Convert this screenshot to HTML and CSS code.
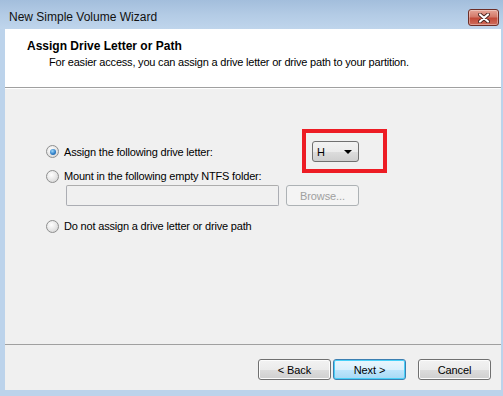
FILE: index.html
```html
<!DOCTYPE html>
<html>
<head>
    <meta charset="UTF-8">
    <title>New Simple Volume Wizard</title>
    <link rel="stylesheet" href="styles.css">
</head>
<body>
    <div class="window">
        <div class="titlebar">
            <span class="title">New Simple Volume Wizard</span>
            <button class="close-btn" title="Close">
                <svg width="12" height="10" viewBox="0 0 12 10">
                    <path d="M2 1.5 L10 8.5 M10 1.5 L2 8.5" stroke="#4a2420" stroke-width="4" stroke-linecap="round"/>
                    <path d="M2 1.5 L10 8.5 M10 1.5 L2 8.5" stroke="#ffffff" stroke-width="2.2" stroke-linecap="round"/>
                </svg>
            </button>
        </div>

        <div class="client">
            <div class="header">
                <div class="header-title">Assign Drive Letter or Path</div>
                <div class="header-sub">For easier access, you can assign a drive letter or drive path to your partition.</div>
            </div>

            <div class="content">
                <div class="row row-letter">
                    <label class="option">
                        <span class="radio checked"></span>
                        Assign the following drive letter:
                    </label>
                    <div class="combo-wrap">
                        <div class="combo">
                            <span>H</span>
                            <span class="arrow"></span>
                        </div>
                        <div class="highlight"></div>
                    </div>
                </div>

                <div class="row row-mount">
                    <label class="option">
                        <span class="radio"></span>
                        Mount in the following empty NTFS folder:
                    </label>
                </div>

                <div class="row row-path">
                    <div class="path-input"></div>
                    <button class="btn" disabled>Browse...</button>
                </div>

                <div class="row row-none">
                    <label class="option">
                        <span class="radio"></span>
                        Do not assign a drive letter or drive path
                    </label>
                </div>
            </div>

            <div class="footer">
                <button class="btn">&lt; Back</button>
                <button class="btn btn-default">Next &gt;</button>
                <button class="btn btn-cancel">Cancel</button>
            </div>
        </div>
    </div>
</body>
</html>
```

FILE: styles.css
```css
body {
    margin: 0;
    font-family: 'Liberation Sans', Arial, sans-serif;
    background: #b9d1ea;
}
.window {
    width: 503px;
    height: 396px;
    background: #bcd3eb;
    display: flex;
    flex-direction: column;
    overflow: hidden;
}
.titlebar {
    height: 29px;
    box-sizing: border-box;
    padding: 5px 4px 0 9px;
    display: flex;
    align-items: flex-start;
    justify-content: space-between;
    background: linear-gradient(180deg, #a3bedc 0%, #b3cbe5 50%, #bfd5ec 100%);
}
.title {
    font-size: 12px;
    color: #111;
    line-height: 24px;
}
.close-btn {
    width: 31px;
    height: 17px;
    margin-top: 4px;
    padding: 0;
    border: 1px solid #6d2e27;
    border-radius: 3px;
    background: linear-gradient(180deg, #e6a597 0%, #d47a6a 45%, #c24a38 55%, #cf6d5c 100%);
    box-shadow: inset 0 0 0 1px rgba(255,255,255,0.35);
    display: flex;
    align-items: center;
    justify-content: center;
}
.client {
    margin: 0 2px 0 5px;
    height: 361px;
    background: #f0f0f0;
    display: flex;
    flex-direction: column;
}
.header {
    height: 59px;
    box-sizing: border-box;
    background: #fff;
    border-bottom: 1px solid #a0a0a0;
    padding: 10px 0 0 22px;
}
.header-title {
    font-size: 12px;
    font-weight: bold;
    color: #000;
    line-height: 14px;
}
.header-sub {
    font-size: 11px;
    letter-spacing: -0.2px;
    color: #000;
    padding-left: 22px;
    margin-top: 2px;
    line-height: 14px;
}
.content {
    flex: 1;
    border-top: 1px solid #fff;
    padding: 0 0 0 41px;
    font-size: 11px;
    letter-spacing: -0.18px;
    color: #000;
}
.row {
    display: flex;
    align-items: center;
}
.row-letter {
    margin-top: 52px;
    height: 21px;
}
.row-mount {
    margin-top: 6px;
    height: 16px;
}
.row-path {
    margin-top: 1px;
    padding-left: 20px;
    gap: 7px;
}
.row-none {
    margin-top: 12px;
    height: 16px;
}
.option {
    display: flex;
    align-items: center;
    gap: 5px;
}
.row-letter .option {
    width: 266px;
}
.radio {
    width: 11px;
    height: 11px;
    border: 1px solid #8e8f8f;
    border-radius: 50%;
    background: radial-gradient(circle at 40% 35%, #ffffff 0%, #eaeaea 45%, #cfcfcf 100%);
    display: flex;
    align-items: center;
    justify-content: center;
}
.radio.checked::after {
    content: "";
    width: 6px;
    height: 6px;
    border-radius: 50%;
    background: radial-gradient(circle at 40% 35%, #9ed8fb 0%, #2f7fc8 55%, #16508c 100%);
}
.combo-wrap {
    position: relative;
}
.combo {
    width: 47px;
    height: 21px;
    box-sizing: border-box;
    border: 1px solid #707070;
    border-radius: 3px;
    background: linear-gradient(180deg, #f2f2f2 0%, #ebebeb 50%, #dddddd 51%, #cfcfcf 100%);
    display: flex;
    align-items: center;
    justify-content: space-between;
    padding: 0 6px 0 4px;
    font-size: 11px;
}
.arrow {
    width: 0;
    height: 0;
    border-left: 4px solid transparent;
    border-right: 4px solid transparent;
    border-top: 4px solid #000;
}
.highlight {
    position: absolute;
    left: -10px;
    top: -12px;
    width: 85px;
    height: 44px;
    box-sizing: border-box;
    border: 4px solid #ed1c24;
}
.path-input {
    width: 213px;
    height: 21px;
    box-sizing: border-box;
    border: 1px solid #abadb3;
    border-top-color: #adadad;
    border-radius: 2px;
    background: #f0f0f0;
}
.btn {
    width: 73px;
    height: 21px;
    padding: 0;
    font-family: inherit;
    font-size: 11px;
    letter-spacing: -0.1px;
    color: #000;
    border: 1px solid #707070;
    border-radius: 3px;
    background: linear-gradient(180deg, #f2f2f2 0%, #ebebeb 50%, #dddddd 51%, #cfcfcf 100%);
    box-shadow: inset 0 0 0 1px #fcfcfc;
}
.btn:disabled {
    color: #a0a0a0;
    border-color: #adb2b5;
    background: #f4f4f4;
    box-shadow: none;
}
.footer {
    height: 46px;
    box-sizing: border-box;
    border-top: 1px solid #a0a0a0;
    padding: 14px 10px 0 0;
    display: flex;
    justify-content: flex-end;
    gap: 2px;
}
.btn-default {
    border-color: #3c7fb1;
    box-shadow: inset 0 0 0 1px #48d0f8;
    background: linear-gradient(180deg, #eaf6fd 0%, #d9f0fc 50%, #bee6fd 51%, #a7d9f5 100%);
}
.btn-cancel {
    margin-left: 10px;
}
```
